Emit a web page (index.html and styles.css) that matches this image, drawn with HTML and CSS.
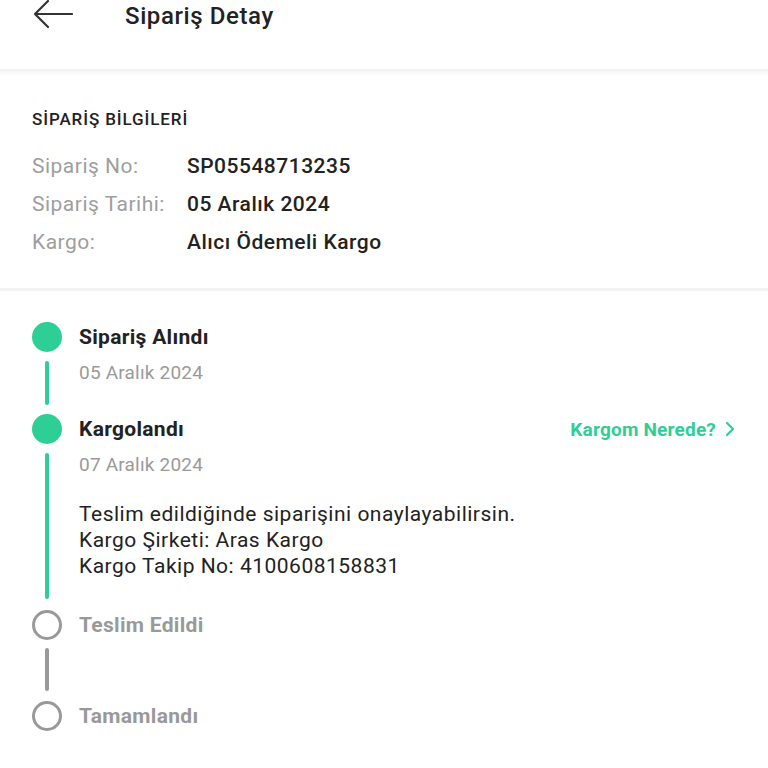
FILE: index.html
```
<!DOCTYPE html>
<html lang="tr">
<head>
<meta charset="utf-8">
<title>Sipariş Detay</title>
<link rel="stylesheet" href="styles.css">
</head>
<body>
<div class="page">
  <header class="topbar">
    <div class="topbar-row">
      <svg class="back" width="40" height="30" viewBox="0 0 40 30" aria-hidden="true">
        <path d="M2 14 H39 M15 1 L2 14 L15 27" fill="none" stroke="#333" stroke-width="2.2" stroke-linecap="round" stroke-linejoin="round"/>
      </svg>
      <h1 class="title">Sipariş Detay</h1>
    </div>
  </header>
  <div class="shadow-band"></div>

  <section class="info">
    <h2 class="info-title">SİPARİŞ BİLGİLERİ</h2>
    <div class="info-rows">
      <div class="info-row"><span class="label">Sipariş No:</span><span class="value">SP05548713235</span></div>
      <div class="info-row"><span class="label">Sipariş Tarihi:</span><span class="value">05 Aralık 2024</span></div>
      <div class="info-row"><span class="label">Kargo:</span><span class="value">Alıcı Ödemeli Kargo</span></div>
    </div>
  </section>
  <div class="divider"></div>

  <section class="timeline">
    <div class="step step-done">
      <div class="rail"><span class="dot"></span><span class="line"></span></div>
      <div class="content c1">
        <div class="step-title">Sipariş Alındı</div>
        <div class="step-date">05 Aralık 2024</div>
      </div>
    </div>
    <div class="step step-done">
      <div class="rail"><span class="dot"></span><span class="line line-long"></span></div>
      <div class="content c2">
        <div class="title-row">
          <div class="step-title">Kargolandı</div>
          <a class="track">Kargom Nerede?
            <svg width="12" height="16" viewBox="0 0 12 16" aria-hidden="true"><path d="M3 2 L9 8 L3 14" fill="none" stroke="currentColor" stroke-width="2.2" stroke-linecap="round" stroke-linejoin="round"/></svg>
          </a>
        </div>
        <div class="step-date">07 Aralık 2024</div>
        <div class="step-text">
          <div>Teslim edildiğinde siparişini onaylayabilirsin.</div>
          <div>Kargo Şirketi: Aras Kargo</div>
          <div>Kargo Takip No: 4100608158831</div>
        </div>
      </div>
    </div>
    <div class="step step-todo s3">
      <div class="rail"><span class="dot"></span><span class="line"></span></div>
      <div class="content">
        <div class="step-title">Teslim Edildi</div>
      </div>
    </div>
    <div class="step step-todo">
      <div class="rail"><span class="dot"></span></div>
      <div class="content">
        <div class="step-title">Tamamlandı</div>
      </div>
    </div>
  </section>
</div>
</body>
</html>
```
FILE: styles.css
```
* { box-sizing: border-box; }
html, body { margin: 0; padding: 0; background: #fff; }
body { font-family: Roboto, "Noto Sans", "Liberation Sans", sans-serif; color: #222; }
.page { width: 768px; }

.topbar { height: 69px; background: #fff; }
.topbar-row { display: flex; align-items: center; height: 32px; padding-left: 33px; }
.back { display: block; margin-top: -3px; }
.title { margin: 0 0 0 52px; font-size: 24px; font-weight: 500; color: #222; line-height: 32px; letter-spacing: 0.6px; }
.shadow-band { height: 7px; background: linear-gradient(#f1f1f1, #fbfbfb 70%, #fff); }

.info { padding: 33px 32px 27px; }
.info-title { margin: 0; font-size: 17px; font-weight: 500; line-height: 20px; color: #222; letter-spacing: 0.9px; }
.info-rows { margin-top: 18px; }
.info-row { display: flex; height: 38px; align-items: center; font-size: 21px; letter-spacing: 0.5px; }
.label { width: 155px; color: #9e9e9e; }
.value { color: #222; font-weight: 500; }
.divider { height: 3px; background: #f3f3f3; }

.timeline { padding: 31px 32px 0; }
.step { display: flex; }
.rail { width: 30px; display: flex; flex-direction: column; align-items: center; flex-shrink: 0; }
.dot { width: 30px; height: 30px; border-radius: 50%; flex-shrink: 0; }
.line { width: 4px; border-radius: 2px; flex: 1; margin: 9px 0 9px; }
.step-done .dot { background: #2dcf96; }
.step-done .line { background: #2dcf96; }
.step-done .line-long { margin-bottom: 11px; }
.step-todo .dot { border: 3.5px solid #999; background: #fff; }
.step-todo .line { background: #999; margin: 8px 0 10px; }
.s3 { min-height: 91px; }

.content { flex: 1; padding-left: 17px; }
.c1 { padding-bottom: 30px; }
.c2 { padding-bottom: 31px; }
.title-row { display: flex; justify-content: space-between; align-items: center; }
.step-title { font-size: 21px; font-weight: 700; line-height: 30px; color: #222; letter-spacing: 0.3px; }
.step-todo .step-title { color: #999; }
.step-date { margin-top: 10px; font-size: 19px; line-height: 22px; color: #9a9a9a; letter-spacing: 0.2px; }
.step-text { margin-top: 25px; font-size: 21px; line-height: 26px; color: #222; letter-spacing: 0.5px; }
.track { display: flex; align-items: center; gap: 8px; color: #2dcf96; font-size: 19px; font-weight: 700; text-decoration: none; letter-spacing: 0.2px; }
.track svg { display: block; }
```
